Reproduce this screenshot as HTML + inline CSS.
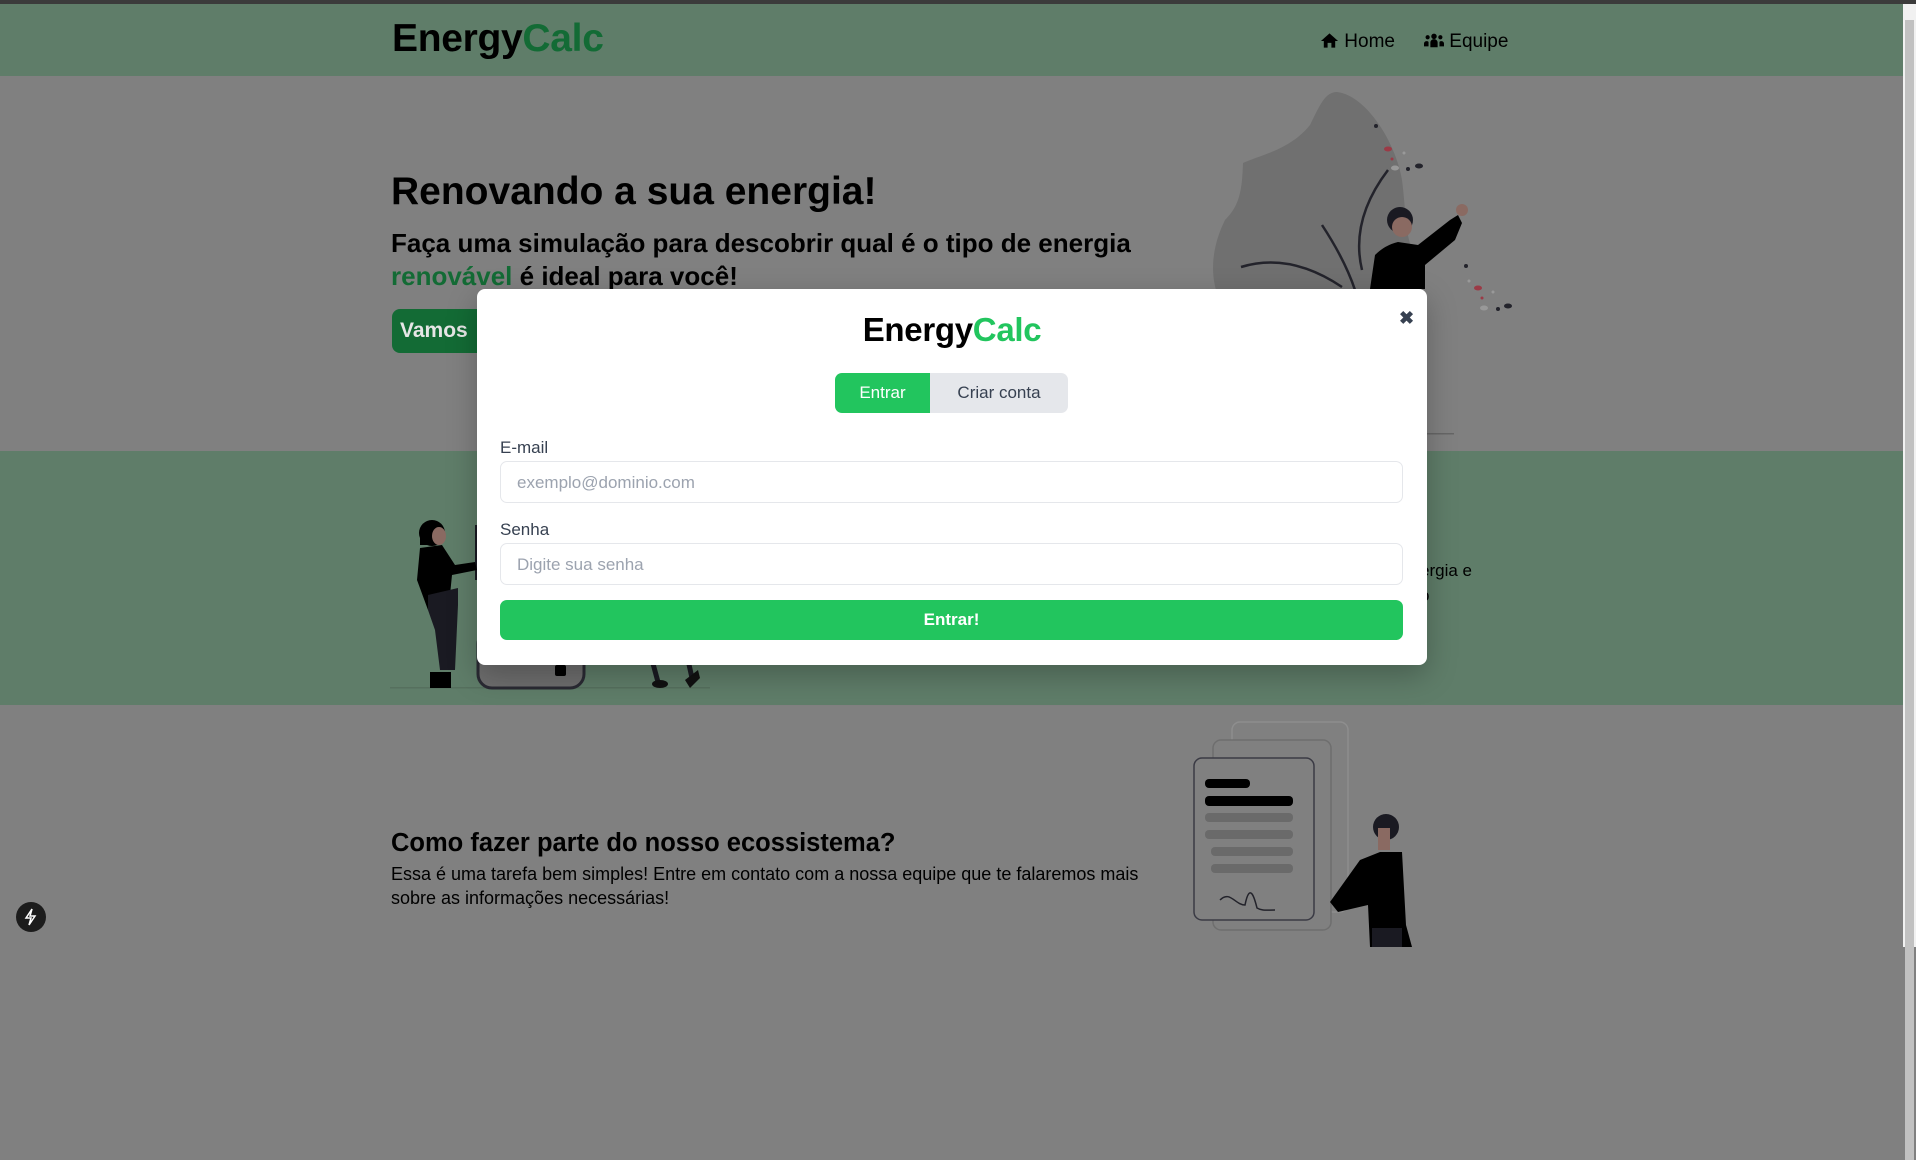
<!DOCTYPE html>
<html><head><meta charset="utf-8"><style>
*{box-sizing:border-box;margin:0;padding:0}
body{width:1916px;height:947px;overflow:hidden;background:#808080;font-family:"Liberation Sans",Arial,sans-serif;position:relative}
.abs{position:absolute}
.topbar{left:0;top:0;width:1916px;height:4px;background:#3b3b3b}
.header{left:0;top:4px;width:1903px;height:72px;background:#5f7d69}
.logo{font-weight:700;font-size:39px;letter-spacing:-0.3px;white-space:nowrap}
.nav{top:31px;font-size:19px;color:#000;white-space:nowrap}
.green{left:0;top:451px;width:1903px;height:254px;background:#5f7d69}
.scroll{left:1903px;top:4px;width:13px;height:943px;background:#f1f1f1}
.thumb{left:1905px;top:20px;width:9px;height:1140px;background:#c1c1c1}
.modal{left:477px;top:289px;width:950px;height:376px;background:#fff;border-radius:8px;box-shadow:0 10px 30px rgba(0,0,0,.25)}
.lbl{font-size:17px;color:#374151}
.inp{width:903px;height:42px;border:1.5px solid #e5e7eb;border-radius:7px;font-size:17px;color:#9ca3af;padding:11px 16px}
</style></head><body>
<div class="abs topbar"></div>
<div class="abs header"></div>
<div class="abs logo" style="left:392px;top:17px"><span style="color:#000">Energy</span><span style="color:#136b35">Calc</span></div>
<div class="abs nav" style="left:1320px"><svg width="19" height="16" viewBox="0 0 20 16" style="vertical-align:-1px"><path d="M10 1L1 9h3v7h4v-5h4v5h4V9h3z" fill="#000"/></svg> Home</div>
<div class="abs nav" style="left:1424px"><svg width="20" height="16" viewBox="0 0 22 16" style="vertical-align:-1px"><circle cx="11" cy="4" r="3"/><circle cx="4" cy="5" r="2.3"/><circle cx="18" cy="5" r="2.3"/><path d="M7 16v-5a4 4 0 0 1 8 0v5zM0 15v-3a3 3 0 0 1 5-2v5zM22 15v-3a3 3 0 0 0-5-2v5z"/></svg> Equipe</div>

<!-- hero illustration -->
<svg class="abs" style="left:1180px;top:80px" width="380" height="380" viewBox="0 0 380 380">
<path d="M157,12 C185,15 215,60 222,100 C226,130 225,160 235,175 L240,220 L40,220 C30,200 30,170 45,140 C60,125 62,110 63,83 C80,75 110,70 130,45 C140,25 145,12 157,12Z" fill="#707070"/>
<path d="M61,187 Q110,172 162,207 M142,145 Q165,180 175,210 M208,90 Q170,140 182,190" stroke="#23232b" stroke-width="2.5" fill="none"/>
<circle cx="220" cy="140" r="13" fill="#1a1a22"/><circle cx="222" cy="147" r="10" fill="#8a6a62"/>
<path d="M190,209 L195,175 Q205,165 218,162 L238,165 L270,140 L278,135 L282,143 L275,160 L245,185 L245,209Z" fill="#000"/>
<circle cx="282" cy="130" r="6" fill="#8a6a62"/>
<circle cx="196" cy="46" r="2" fill="#23232b"/><ellipse cx="208" cy="69" rx="4" ry="2.5" fill="#9b3a46"/><circle cx="212" cy="79" r="1.5" fill="#9b3a46"/><ellipse cx="215" cy="88" rx="4" ry="2.5" fill="#999"/><circle cx="228" cy="89" r="2" fill="#23232b"/><ellipse cx="239" cy="86" rx="4" ry="2.5" fill="#23232b"/><circle cx="224" cy="73" r="1.5" fill="#999"/>
<circle cx="286" cy="186" r="2" fill="#23232b"/><circle cx="289" cy="201" r="1.5" fill="#999"/><ellipse cx="298" cy="208" rx="4" ry="2.5" fill="#9b3a46"/><circle cx="302" cy="218" r="1.5" fill="#9b3a46"/><ellipse cx="304" cy="228" rx="4" ry="2.5" fill="#999"/><circle cx="318" cy="229" r="2" fill="#23232b"/><ellipse cx="328" cy="226" rx="4" ry="2.5" fill="#23232b"/><circle cx="313" cy="212" r="1.5" fill="#999"/>
<rect x="247" y="353" width="27" height="1.5" fill="#666"/>
</svg>

<div class="abs" style="left:391px;top:170px;font-size:39px;font-weight:700;color:#000;white-space:nowrap">Renovando a sua energia!</div>
<div class="abs" style="left:391px;top:227px;font-size:26px;font-weight:700;color:#000;line-height:33px;white-space:nowrap">Faça uma simulação para descobrir qual é o tipo de energia<br><span style="color:#136b35">renovável</span> é ideal para você!</div>
<div class="abs" style="left:392px;top:309px;width:200px;height:44px;background:#136b35;border-radius:8px;font-weight:700;font-size:21px;padding:10px 8px;color:#e6e6e6">Vamos</div>

<div class="abs green"></div>
<!-- section 2 illustration -->
<svg class="abs" style="left:380px;top:500px" width="340" height="200" viewBox="0 0 340 200">
<rect x="10" y="187" width="320" height="1.5" fill="#56705e"/>
<rect x="95" y="25" width="3" height="55" fill="#1a1a22"/>
<circle cx="52" cy="33" r="13" fill="#000"/><rect x="40" y="33" width="10" height="12" fill="#000"/><ellipse cx="59" cy="36" rx="7" ry="9" fill="#8a6a62"/>
<path d="M40,48 L62,45 L75,65 L95,62 L97,70 L72,75 L70,95 L48,110 L37,80Z" fill="#000"/>
<path d="M48,95 L78,88 L78,105 L75,170 L60,170 L55,130 L48,110Z" fill="#1a1a22"/>
<rect x="50" y="172" width="11" height="16" fill="#000"/><rect x="61" y="172" width="10" height="16" fill="#000"/>
<rect x="98" y="130" width="106" height="58" rx="14" fill="#6e6e6e" stroke="#2a2a33" stroke-width="3"/>
<rect x="175" y="165" width="11" height="11" rx="2" fill="#000"/>
<path d="M272,160 L278,182 M308,160 L312,178" stroke="#1a1a22" stroke-width="5"/>
<ellipse cx="280" cy="184" rx="8" ry="4" fill="#111"/><path d="M305,180 L318,170 L320,178 L310,188Z" fill="#111"/>
</svg>
<div class="abs" style="left:1420px;top:558px;font-size:17px;color:#000;line-height:25px">ergia e<br>o</div>

<!-- section 3 illustration -->
<svg class="abs" style="left:1180px;top:700px" width="260" height="247" viewBox="0 0 260 247">
<rect x="52" y="22" width="116" height="190" rx="8" fill="none" stroke="#8e8e8e" stroke-width="1.5"/>
<rect x="33" y="40" width="118" height="190" rx="8" fill="#808080" stroke="#6e6e6e" stroke-width="1.5"/>
<rect x="14" y="58" width="120" height="162" rx="8" fill="#808080" stroke="#3a3a44" stroke-width="1.5"/>
<rect x="25" y="79" width="45" height="9" rx="4" fill="#000"/><rect x="25" y="96" width="88" height="10" rx="4" fill="#000"/>
<rect x="25" y="113" width="88" height="9" rx="4" fill="#6a6a6a"/><rect x="25" y="130" width="88" height="9" rx="4" fill="#6a6a6a"/><rect x="31" y="147" width="82" height="9" rx="4" fill="#6a6a6a"/><rect x="31" y="164" width="82" height="9" rx="4" fill="#6a6a6a"/>
<path d="M40,200 c10,-10 15,5 25,5 c5,-25 10,-5 12,3 c5,3 10,2 18,2" stroke="#23232b" stroke-width="1.5" fill="none"/>
<circle cx="206" cy="127" r="13" fill="#1a1a22"/><rect x="198" y="128" width="12" height="22" fill="#8a6a62"/>
<path d="M150,202 L180,160 L200,152 L222,152 L226,225 L232,247 L190,247 L188,205 L158,212Z" fill="#000"/>
<rect x="192" y="228" width="30" height="19" fill="#1a1a22"/>
</svg>
<div class="abs" style="left:391px;top:829px;font-size:25.5px;font-weight:700;color:#000;white-space:nowrap">Como fazer parte do nosso ecossistema?</div>
<div class="abs" style="left:391px;top:862px;font-size:18px;color:#000;line-height:24px;white-space:nowrap">Essa é uma tarefa bem simples! Entre em contato com a nossa equipe que te falaremos mais<br>sobre as informações necessárias!</div>

<div class="abs" style="left:16px;top:902px;width:30px;height:30px;border-radius:50%;background:#1c1c1c"><svg width="30" height="30" viewBox="0 0 30 30"><path d="M16 7l-6 9h5l-2 7 6-9h-5z" fill="none" stroke="#fff" stroke-width="1.5"/></svg></div>

<div class="abs scroll"></div>
<div class="abs thumb"></div>

<div class="abs modal">
  <div class="abs logo" style="left:0;width:950px;text-align:center;top:22px;font-size:33px"><span style="color:#000">Energy</span><span style="color:#22c55e">Calc</span></div>
  <div class="abs" style="left:922px;top:19px;font-size:18px;color:#374151;font-weight:700">✖</div>
  <div class="abs" style="left:358px;top:84px;width:95px;height:40px;background:#22c55e;border-radius:7px 0 0 7px;color:#fff;font-size:17px;text-align:center;line-height:40px">Entrar</div>
  <div class="abs" style="left:453px;top:84px;width:138px;height:40px;background:#e5e7eb;border-radius:0 7px 7px 0;color:#374151;font-size:17px;text-align:center;line-height:40px">Criar conta</div>
  <div class="abs lbl" style="left:23px;top:149px">E-mail</div>
  <div class="abs inp" style="left:23px;top:172px">exemplo@dominio.com</div>
  <div class="abs lbl" style="left:23px;top:231px">Senha</div>
  <div class="abs inp" style="left:23px;top:254px">Digite sua senha</div>
  <div class="abs" style="left:23px;top:311px;width:903px;height:40px;background:#22c55e;border-radius:7px;color:#fff;font-weight:700;font-size:17px;text-align:center;line-height:40px">Entrar!</div>
</div>
</body></html>
